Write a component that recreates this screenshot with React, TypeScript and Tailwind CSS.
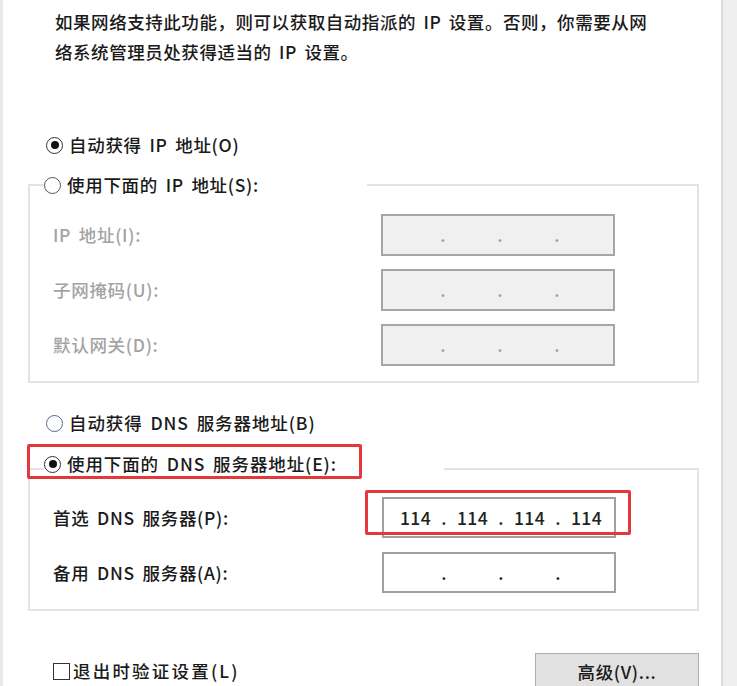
function Radio({ checked = false, ring = "border-[#333333]" }: { checked?: boolean; ring?: string }) {
  return (
    <span className={`flex h-[17px] w-[17px] shrink-0 items-center justify-center rounded-full border-[1.5px] bg-white ${ring}`}>
      {checked && <span className="h-[8px] w-[8px] rounded-full bg-[#111111]" />}
    </span>
  );
}

function IpBox({ value, disabled = false }: { value?: string[]; disabled?: boolean }) {
  const parts = value ?? ["", "", "", ""];
  return (
    <div
      className={`flex h-full w-[234px] items-center border-2 pl-[9px] tracking-[0.3px] ${
        disabled ? "border-[#a6a6a6] bg-[#f0f0f0]" : "border-[#a0a0a0] bg-white"
      }`}
    >
      {parts.map((p, i) => (
        <div key={i} className="flex items-center">
          {i > 0 && (
            <span className={`w-[12px] text-center ${disabled ? "text-[#a0a0a0]" : "text-[#222222]"}`}>.</span>
          )}
          <span className="w-[45px] text-center text-[#222222]">{p}</span>
        </div>
      ))}
    </div>
  );
}

export default function App() {
  return (
    <div
      className="flex h-[686px] w-[737px] overflow-hidden bg-white text-[17.5px] font-medium leading-[30px] text-[#1a1a1a] [word-spacing:3px]"
      style={{ fontFamily: '"Noto Sans CJK SC", "Noto Sans", sans-serif' }}
    >
      {/* left window edge */}
      <div className="w-[3px] shrink-0 bg-[#e9e9e9]" />

      <main className="flex w-[718px] flex-col tracking-[0.7px]">
        {/* intro text */}
        <p className="mt-[7px] whitespace-nowrap pl-[52px] tracking-[0.55px]">
          如果网络支持此功能，则可以获取自动指派的 IP 设置。否则，你需要从网
          <br />
          络系统管理员处获得适当的 IP 设置。
        </p>

        {/* automatic IP */}
        <label className="mt-[63px] flex h-[30px] items-center gap-[6px] pl-[43px]">
          <Radio checked />
          <span>自动获得 IP 地址(O)</span>
        </label>

        {/* static IP group */}
        <fieldset className="ml-[25px] mt-[10px] w-[671px] border-2 border-[#e3e3e3] p-0">
          <legend className="ml-[14px] w-[323px] p-0">
            <span className="flex h-[30px] items-center gap-[6px]">
              <Radio ring="border-[#555555]" />
              <span>使用下面的 IP 地址(S):</span>
            </span>
          </legend>
          <div className="flex flex-col gap-[13px] pb-[15px] pl-[23px] pt-[14px]">
            {["IP 地址(I):", "子网掩码(U):", "默认网关(D):"].map((label) => (
              <div key={label} className="flex h-[42px] items-center">
                <span className="w-[328px] text-[#a3a3a3]">{label}</span>
                <IpBox disabled />
              </div>
            ))}
          </div>
        </fieldset>

        {/* automatic DNS */}
        <label className="mt-[25px] flex h-[30px] items-center gap-[6px] pl-[43px] tracking-[0.9px]">
          <Radio ring="border-[#4f6c8c]" />
          <span>自动获得 DNS 服务器地址(B)</span>
        </label>

        {/* static DNS group */}
        <fieldset className="ml-[25px] mt-[11px] w-[671px] border-2 border-[#e3e3e3] p-0">
          <legend className="relative ml-[14px] w-[400px] p-0 pb-[10px]">
            <span className="flex h-[30px] items-center gap-[6px] tracking-[0.9px]">
              <Radio checked />
              <span>使用下面的 DNS 服务器地址(E):</span>
            </span>
            <span className="absolute left-[-17px] top-[-5px] h-[35px] w-[335px] rounded-[2px] border-[3px] border-[#e5383b]" />
          </legend>
          <div className="flex flex-col gap-[14px] pb-[16px] pl-[23px] pt-[8px]">
            <div className="flex h-[41px] items-center">
              <span className="w-[329px]">首选 DNS 服务器(P):</span>
              <div className="relative h-full">
                <IpBox value={["114", "114", "114", "114"]} />
                <span className="absolute left-[-17px] top-[-7px] h-[45px] w-[266px] rounded-[2px] border-[3px] border-[#e5383b]" />
              </div>
            </div>
            <div className="flex h-[41px] items-center">
              <span className="w-[329px]">备用 DNS 服务器(A):</span>
              <IpBox />
            </div>
          </div>
        </fieldset>

        {/* footer row */}
        <div className="mt-[42px] flex items-center justify-between pl-[50px] pr-[22px]">
          <label className="flex items-center gap-[3px]">
            <span className="h-[17px] w-[17px] border-[1.5px] border-[#333333] bg-white" />
            <span className="tracking-[2.2px]">退出时验证设置(L)</span>
          </label>
          <button className="h-[36px] w-[164px] border border-[#adadad] bg-[#e1e1e1] pt-[2px] text-[#1a1a1a]">
            高级(V)...
          </button>
        </div>
      </main>

      {/* right window edge */}
      <div className="w-[16px] shrink-0 border-l-2 border-[#dcdcdc] bg-[#efefef]" />
    </div>
  );
}
